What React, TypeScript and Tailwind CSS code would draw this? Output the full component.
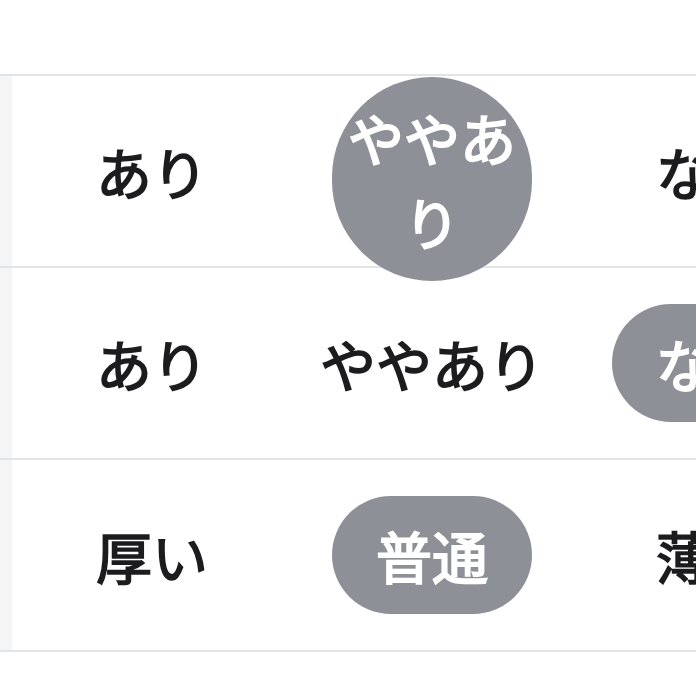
import React from 'react';

type Cell = { label: string; selected?: boolean };

const rows: Cell[][] = [
  [{ label: 'あり' }, { label: 'ややあり', selected: true }, { label: 'なし' }],
  [{ label: 'あり' }, { label: 'ややあり' }, { label: 'なし', selected: true }],
  [{ label: '厚い' }, { label: '普通', selected: true }, { label: '薄い' }],
];

function App() {
  return (
    <div
      className="h-[696px] w-[696px] overflow-hidden bg-white text-[#1c1c1e]"
      style={{ fontFamily: '"Noto Sans CJK JP", "Noto Sans", sans-serif' }}
    >
      <div className="h-[74px]" />
      <div className="border-t-2 border-[#e1e3e7]">
        {rows.map((row, i) => (
          <div key={i} className="flex h-[192px] border-b-2 border-[#e1e3e7]">
            <div className="w-[12px] shrink-0 bg-[#f4f5f7]" />
            {row.map((cell, j) => (
              <div key={j} className="flex w-[280px] shrink-0 items-center justify-center">
                {cell.selected ? (
                  <div
                    className={`w-[200px] shrink-0 rounded-full bg-[#8e9097] px-[14px] text-center text-[56px] font-normal leading-[1.5] text-white [-webkit-text-stroke:2px_currentColor] ${
                      cell.label.length > 3 ? 'mt-[1px] self-start py-[18px]' : 'py-[17px]'
                    }`}
                  >
                    {cell.label}
                  </div>
                ) : (
                  <span className="whitespace-nowrap text-[56px] font-normal leading-[1.5] [-webkit-text-stroke:1.6px_currentColor]">
                    {cell.label}
                  </span>
                )}
              </div>
            ))}
          </div>
        ))}
      </div>
    </div>
  );
}

export default App;
